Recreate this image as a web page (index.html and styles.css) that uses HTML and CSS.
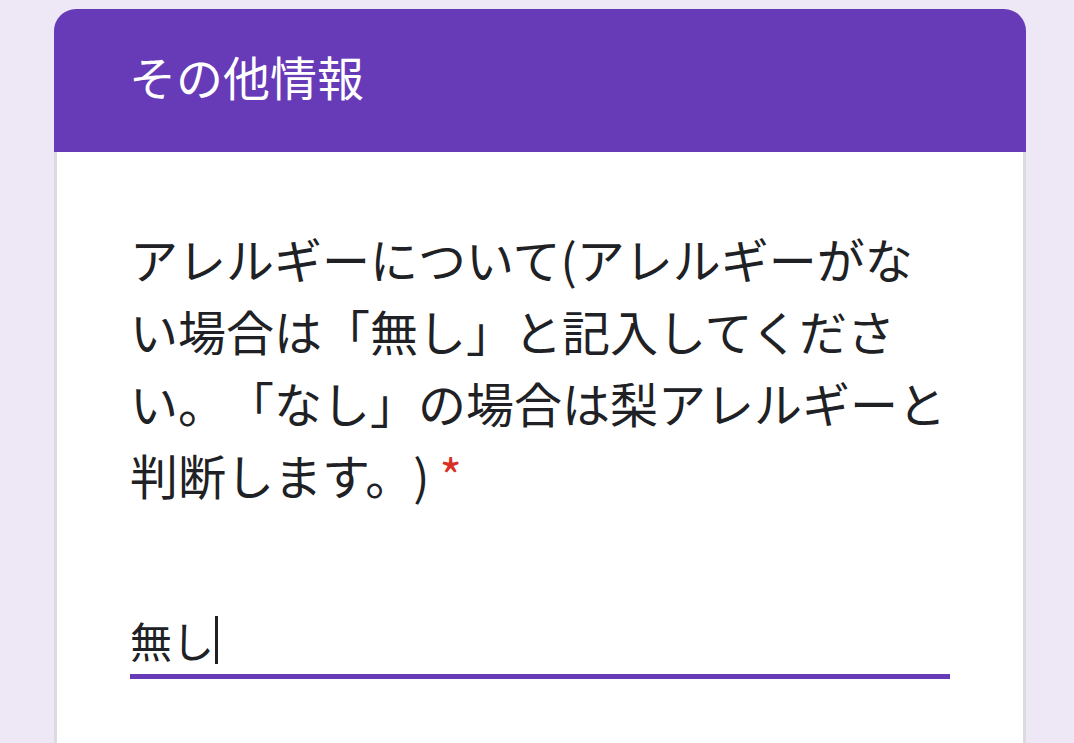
FILE: index.html
```html
<!DOCTYPE html>
<html lang="ja">
<head>
    <meta charset="UTF-8">
    <meta name="viewport" content="width=device-width, initial-scale=1.0">
    <title>その他情報</title>
    <link rel="stylesheet" href="styles.css">
</head>
<body>

<div class="section-card">
    <div class="section-header">その他情報</div>

    <div class="section-body">
        <div class="question">アレルギーについて(アレルギーがない場合は「無し」と記入してください。「なし」の場合は梨アレルギーと判断します。)<span class="required">*</span></div>

        <div class="answer">
            <span class="answer-text">無し</span><span class="caret"></span>
        </div>
    </div>
</div>

</body>
</html>
```

FILE: styles.css
```css
body {
    margin: 0;
    background-color: #ede7f6;
    font-family: "Noto Sans CJK JP", "Noto Sans", sans-serif;
    color: #202124;
    overflow: hidden;
    text-spacing-trim: space-all;
}
.section-card {
    width: 972px;
    margin: 9px 0 0 54px;
    display: flex;
    flex-direction: column;
}
.section-header {
    height: 133px;
    display: flex;
    align-items: center;
    padding: 0 0 10px 75px;
    background-color: #673ab7;
    color: #fff;
    font-size: 47px;
    border-radius: 22px 22px 0 0;
}
.section-body {
    background-color: #fff;
    border-left: 3px solid #dadce0;
    border-right: 3px solid #dadce0;
    padding: 70px 73px 0 73px;
    min-height: 700px;
}
.question {
    font-size: 48px;
    line-height: 72px;
}
.required {
    color: #d93025;
    margin-left: 10px;
}
.answer {
    margin-top: 102px;
    font-size: 42px;
    line-height: 56px;
    height: 56px;
    padding-bottom: 6px;
    border-bottom: 5px solid #673ab7;
    display: flex;
    align-items: center;
}
.caret {
    width: 3px;
    height: 48px;
    margin-left: 1px;
    background-color: #202124;
}
```
